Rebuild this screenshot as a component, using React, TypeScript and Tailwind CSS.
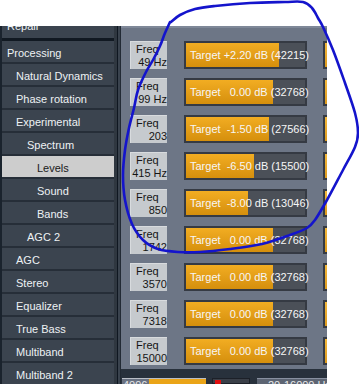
import React from "react";

type Item = { label: string; pl: string; selected?: boolean };

const items: Item[] = [
  { label: "Processing", pl: "pl-[5px]" },
  { label: "Natural Dynamics", pl: "pl-[14px]" },
  { label: "Phase rotation", pl: "pl-[14px]" },
  { label: "Experimental", pl: "pl-[14px]" },
  { label: "Spectrum", pl: "pl-[25px]" },
  { label: "Levels", pl: "pl-[35px]", selected: true },
  { label: "Sound", pl: "pl-[35px]" },
  { label: "Bands", pl: "pl-[35px]" },
  { label: "AGC 2", pl: "pl-[25px]" },
  { label: "AGC", pl: "pl-[14px]" },
  { label: "Stereo", pl: "pl-[14px]" },
  { label: "Equalizer", pl: "pl-[14px]" },
  { label: "True Bass", pl: "pl-[14px]" },
  { label: "Multiband", pl: "pl-[14px]" },
  { label: "Multiband 2", pl: "pl-[14px]" },
];

const rows = [
  { f: "49 Hz", t: "Target +2.20 dB (42215)", w: 93 },
  { f: "99 Hz", t: "Target   0.00 dB (32768)", w: 87 },
  { f: "203", t: "Target  -1.50 dB (27566)", w: 83 },
  { f: "415 Hz", t: "Target  -6.50 dB (15500)", w: 68 },
  { f: "850", t: "Target  -8.00 dB (13046)", w: 62 },
  { f: "1742", t: "Target   0.00 dB (32768)", w: 87 },
  { f: "3570", t: "Target   0.00 dB (32768)", w: 87 },
  { f: "7318", t: "Target   0.00 dB (32768)", w: 87 },
  { f: "15000", t: "Target   0.00 dB (32768)", w: 87 },
];

const loop: number[][] = [
  [171, 22], [180, 15], [195, 9], [215, 6], [250, 3], [285, 2], [303, 2], [312, 8],
  [318, 18], [323, 27], [333, 50], [345, 83], [355, 113], [358, 133], [355, 147],
  [343, 170], [327, 200], [315, 220], [307, 228], [290, 235], [262, 244], [230, 249],
  [200, 252], [178, 252], [158, 249], [143, 240], [132, 224], [125, 200], [123, 175],
  [125, 150], [129, 128], [134, 108], [138, 90], [146, 72], [153, 60], [160, 46],
  [165, 33], [170, 22],
];

function crPath(pts: number[][]) {
  let d = `M${pts[0][0]},${pts[0][1]}`;
  for (let i = 0; i < pts.length - 1; i++) {
    const p0 = pts[i - 1] || pts[i];
    const p1 = pts[i];
    const p2 = pts[i + 1];
    const p3 = pts[i + 2] || p2;
    const c1x = p1[0] + (p2[0] - p0[0]) / 6;
    const c1y = p1[1] + (p2[1] - p0[1]) / 6;
    const c2x = p2[0] - (p3[0] - p1[0]) / 6;
    const c2y = p2[1] - (p3[1] - p1[1]) / 6;
    d += ` C${c1x.toFixed(1)},${c1y.toFixed(1)} ${c2x.toFixed(1)},${c2y.toFixed(1)} ${p2[0]},${p2[1]}`;
  }
  return d;
}

function SideItem({ item }: { item: Item }) {
  return (
    <div
      className={
        "h-[23px] shrink-0 flex items-center pt-[3px] border-b-2 border-[#262e38] whitespace-nowrap " +
        item.pl +
        " " +
        (item.selected ? "bg-[#cdcdcd] text-[#1a1a1a]" : "bg-[#3b444f] text-[#eef2f4]")
      }
    >
      {item.label}
    </div>
  );
}

function Row({ r }: { r: (typeof rows)[number] }) {
  return (
    <div className="flex h-[28px] shrink-0 w-[260px]">
      <div className="w-[37px] h-[28px] shrink-0 bg-[#c6cace] border-t border-l border-[#d8dbde] text-[#151515] flex flex-col leading-[13px] pt-[1px]">
        <span className="pl-[5px] text-left">Freq</span>
        <span className="text-right whitespace-nowrap">{r.f}</span>
      </div>
      <div className="ml-[17px] w-[123px] h-[28px] border-2 border-[#353a43] bg-[#4b5058] relative shrink-0">
        <div
          className="absolute left-0 top-0 bottom-0 bg-linear-to-b from-[#f2ad22] to-[#d58f0c]"
          style={{ width: r.w }}
        />
        <div className="relative h-full flex items-center pl-[4px] text-[#f6f6f6] whitespace-pre">{r.t}</div>
      </div>
      <div className="ml-[16px] w-[40px] h-[28px] shrink-0 border-2 border-[#353a43] bg-linear-to-b from-[#f4b83a] to-[#dc9a1c]" />
    </div>
  );
}

export default function App() {
  return (
    <div
      className="w-[359px] h-[384px] bg-white relative overflow-hidden text-[11px]"
      style={{ fontFamily: '"Liberation Sans", Arial, sans-serif' }}
    >
      <div className="h-[26px]" />
      <div className="flex h-[358px] w-[327px] overflow-hidden">
        {/* sidebar */}
        <div className="w-[114px] shrink-0 bg-[#1a232d] pl-[2px] flex flex-col overflow-hidden">
          <div className="h-[12px] shrink-0 overflow-hidden bg-[#3b444f]">
            <div className="h-[23px] -mt-[11px] flex items-center pl-[5px] text-[#eef2f4]">Repair</div>
          </div>
          <div className="h-[3px] shrink-0 bg-[#111922]" />
          {items.map((it) => (
            <SideItem key={it.label} item={it} />
          ))}
        </div>
        {/* divider strip */}
        <div className="w-[3px] shrink-0 bg-[#2f3740]" />
        <div className="w-[1px] shrink-0 bg-[#0f1721]" />
        <div className="w-[2px] shrink-0 bg-[#3a434e]" />
        <div className="w-[1px] shrink-0 bg-[#222a34]" />
        {/* main */}
        <div className="flex-1 min-w-0 flex flex-col overflow-hidden">
          <div className="h-[343px] shrink-0 bg-[#6d7686] border-t-2 border-[#7f8898] pt-[13px] pl-[9px] flex flex-col gap-[9px] overflow-hidden">
            {rows.map((r, i) => (
              <Row key={i} r={r} />
            ))}
          </div>
          <div className="h-[9px] shrink-0 bg-[#28313c]" />
          <div className="flex h-[6px] shrink-0 bg-[#28313c] overflow-hidden">
            <div className="ml-[1px] w-[84px] shrink-0 flex border-t border-[#b9bec6] bg-[#6a7282]">
              <div className="w-[27px] pl-[1px] text-[#e6e6e6] leading-[13px]">4096</div>
              <div className="flex-1 bg-[#eaa418]" />
            </div>
            <div className="ml-[6px] w-[38px] shrink-0 border border-[#1c2028] bg-[#3a3f48] pl-[2px] pt-[1px]">
              <div className="w-[6px] h-[6px] bg-[#e01010]" />
            </div>
            <div className="ml-[7px] flex-1 border-t border-[#8890a0] bg-[#5d6573] pl-[11px] text-[#e8e8e8] leading-[13px] whitespace-nowrap">
              20-16000 Hz
            </div>
          </div>
        </div>
      </div>
      <svg
        className="absolute inset-0 pointer-events-none"
        width="359"
        height="384"
        viewBox="0 0 359 384"
      >
        <path d={crPath(loop)} fill="none" stroke="#1414cc" strokeWidth="2.6" strokeLinecap="round" strokeLinejoin="round" />
      </svg>
    </div>
  );
}
